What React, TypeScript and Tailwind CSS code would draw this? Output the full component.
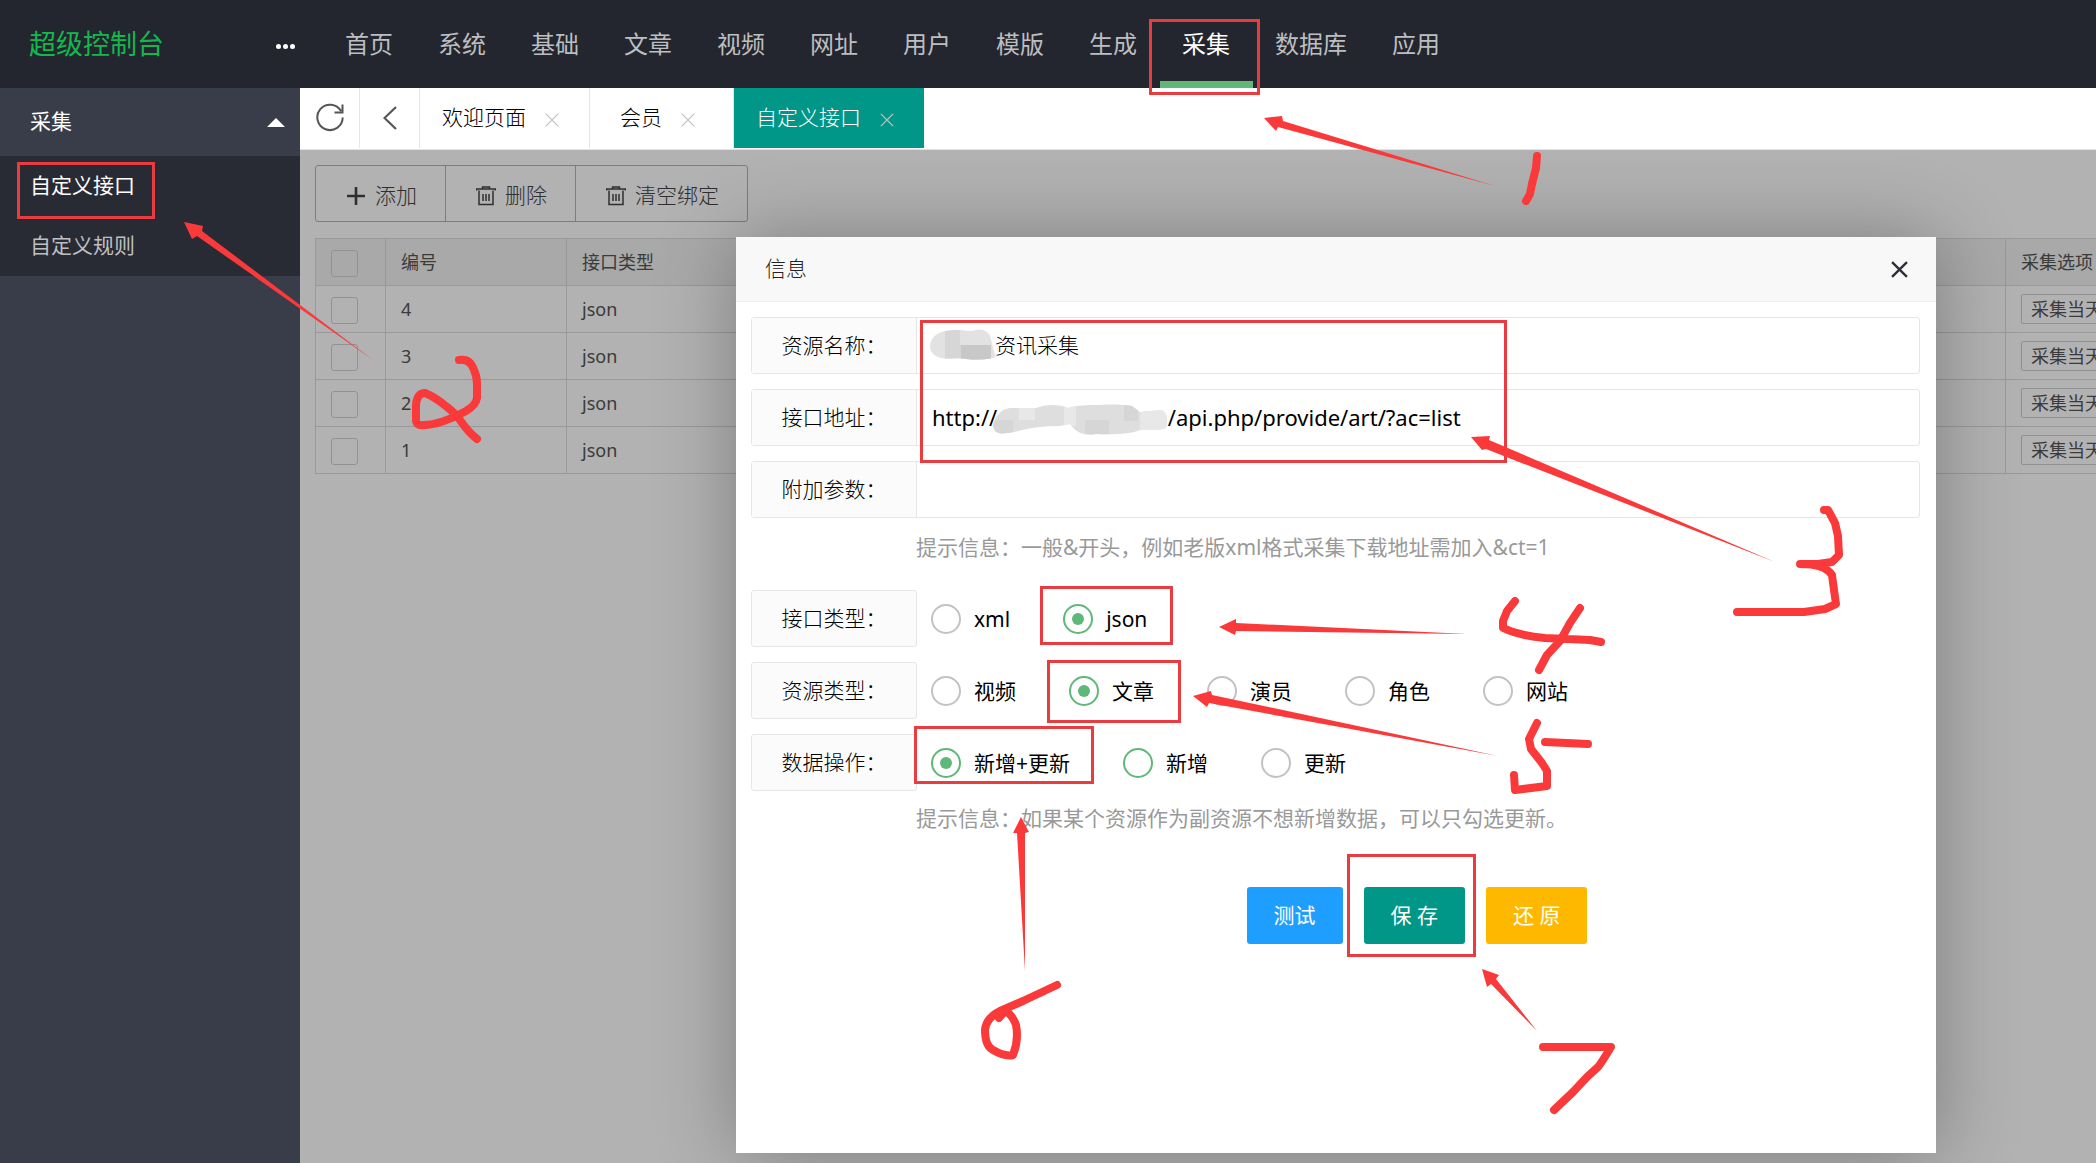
const navItems = ['首页', '系统', '基础', '文章', '视频', '网址', '用户', '模版', '生成', '采集', '数据库', '应用']
const rows = [4, 3, 2, 1]

function TrashIcon() {
  return (
    <svg viewBox="0 0 20 20" className="size-5" fill="none" stroke="currentColor" strokeWidth="1.5">
      <path d="M0.5 4.500v-1.500h19v1.500M6.500 3V1h7v2M3 4.500v14h14v-14M7 8v7M10 8v7M13 8v7" />
    </svg>
  )
}

function PlusIcon() {
  return (
    <svg viewBox="0 0 20 20" className="size-5" fill="none" stroke="currentColor" strokeWidth="2.6">
      <path d="M1 10h18M10 1v18" />
    </svg>
  )
}

function CrossIcon({ className, strokeWidth }: { className: string; strokeWidth: number }) {
  return (
    <svg viewBox="0 0 16 16" className={className} fill="none" stroke="currentColor" strokeWidth={strokeWidth}>
      <path d="M1 1l14 14M15 1L1 15" />
    </svg>
  )
}

function Header() {
  return (
    <header className="flex h-[88px] shrink-0 items-center bg-[#23262e] font-normal">
      <div className="flex w-[323px] shrink-0 items-center justify-between pr-7 pl-[29px]">
        <h1 className="text-[27px] leading-8 text-[#12b84e]">超级控制台</h1>
        <button aria-label="更多" className="mt-1 flex gap-[2px]">
          <i className="size-[5px] rounded-full bg-white" />
          <i className="size-[5px] rounded-full bg-white" />
          <i className="size-[5px] rounded-full bg-white" />
        </button>
      </div>
      <nav className="flex h-full text-2xl text-[#bdbec0]">
        {navItems.map((item) => (
          <a
            key={item}
            href="#"
            className={
              item === '采集'
                ? 'flex items-center border-y-[7px] border-t-transparent border-b-[#5fb878] pr-[23px] pl-[22px] text-white'
                : 'flex items-center pr-[23px] pl-[22px]'
            }
          >
            {item}
          </a>
        ))}
      </nav>
    </header>
  )
}

function Sidebar() {
  return (
    <aside className="w-[300px] shrink-0 bg-[#393d49] text-[21px] font-normal text-white">
      <button className="flex h-[68px] w-full items-center justify-between pr-[15px] pl-[30px]">
        采集
        <svg viewBox="0 0 18 9" className="h-[9px] w-[18px]">
          <path d="M9 0l9 9H0z" fill="#fff" />
        </svg>
      </button>
      <div className="flex flex-col bg-[#282b33]">
        <a href="#" className="flex h-[60px] items-center pl-[30px]">自定义接口</a>
        <a href="#" className="flex h-[60px] items-center pl-[30px] text-[#bebfc2]">自定义规则</a>
      </div>
    </aside>
  )
}

function Tab({ title, active }: { title: string; active?: boolean }) {
  return (
    <div
      className={
        active
          ? 'flex min-w-36 items-center justify-center gap-[19px] bg-[#009688] pr-[30px] pl-[22px] text-white'
          : 'flex min-w-36 items-center justify-center gap-[19px] border-r border-[#e6e6e6] pr-[30px] pl-[22px] text-black'
      }
    >
      <a href="#">{title}</a>
      <button aria-label="关闭" className="pt-1 text-[#c2c2c2]">
        <CrossIcon className="size-[14px]" strokeWidth={1.5} />
      </button>
    </div>
  )
}

function TabBar() {
  return (
    <div className="h-[62px] shrink-0 border-b border-[#e2e2e2] bg-white">
      <div className="flex h-[60px] text-[21px]">
        <button aria-label="刷新" className="flex w-[60px] items-center justify-center border-r border-[#e6e6e6] text-[#555]">
          <svg viewBox="0 0 30 30" className="size-[30px]" fill="none" stroke="currentColor" strokeWidth="2">
            <path d="M27.700 14.500A12.700 12.700 0 1 1 26 8M27.500 1.500V9.500H19.500" />
          </svg>
        </button>
        <button aria-label="后退" className="flex w-[60px] items-center justify-center border-r border-[#e6e6e6] text-[#555]">
          <svg viewBox="0 0 14 24" className="h-6 w-[14px]" fill="none" stroke="currentColor" strokeWidth="2.2">
            <path d="M13 1L1.500 12L13 23" />
          </svg>
        </button>
        <Tab title="欢迎页面" />
        <Tab title="会员" />
        <Tab title="自定义接口" active />
      </div>
    </div>
  )
}

function Check({ label }: { label: string }) {
  return (
    <input
      type="checkbox"
      aria-label={label}
      className="mt-[2px] block size-[27px] appearance-none rounded-[3px] border border-[#d2d2d2]"
    />
  )
}

function DataTable() {
  const cell = 'h-[47px] border border-[#dcdcdc] px-[15px] py-0 text-left font-normal'
  return (
    <table className="w-[1950px] table-fixed border-collapse text-lg text-[#555]">
      <colgroup>
        <col className="w-[70px]" />
        <col className="w-[181px]" />
        <col className="w-[181px]" />
        <col />
        <col className="w-[259px]" />
      </colgroup>
      <thead>
        <tr className="bg-[#f2f2f2]">
          <th className={cell}><Check label="全选" /></th>
          <th className={cell}>编号</th>
          <th className={cell}>接口类型</th>
          <th className={cell} />
          <th className={cell}>采集选项</th>
        </tr>
      </thead>
      <tbody>
        {rows.map((id) => (
          <tr key={id}>
            <td className={cell}><Check label={`选择 ${id}`} /></td>
            <td className={cell}>{id}</td>
            <td className={cell}>json</td>
            <td className={cell} />
            <td className={cell}>
              <button className="h-[30px] rounded-[2px] border border-[#d0d0d0] px-[9px] leading-7">采集当天</button>
            </td>
          </tr>
        ))}
      </tbody>
    </table>
  )
}

function ListPage() {
  const button = 'flex h-full items-center gap-[9px] border-r border-[#b4b4b4] pt-1 pr-7 pl-[30px] last:border-r-0'
  return (
    <div className="flex flex-col items-start gap-4 pt-[15px] pl-[15px]">
      <div className="flex h-[57px] rounded-[3px] border border-[#b4b4b4] text-[21px] text-[#444]">
        <button className={button}><PlusIcon />添加</button>
        <button className={button}><TrashIcon />删除</button>
        <button className={button}><TrashIcon />清空绑定</button>
      </div>
      <DataTable />
    </div>
  )
}

type TextRowProps = { id: string; label: string; value: string; large?: boolean }

function TextRow({ id, label, value, large }: TextRowProps) {
  return (
    <div className="flex h-[57px] rounded-[3px] border border-[#e6e6e6]">
      <label htmlFor={id} className="flex w-[165px] shrink-0 items-center justify-center border-r border-[#e6e6e6] bg-[#fbfbfb]">
        {label}
      </label>
      <input
        id={id}
        type="text"
        defaultValue={value}
        className={
          large ? 'min-w-0 flex-1 px-[15px] text-[22px] font-normal outline-none' : 'min-w-0 flex-1 px-[15px] outline-none'
        }
      />
    </div>
  )
}

type RadioRowProps = { name: string; label: string; options: string[]; selected: string; hovered?: string }

function RadioRow({ name, label, options, selected, hovered }: RadioRowProps) {
  const ring =
    'grid size-[30px] shrink-0 appearance-none place-content-center rounded-full border-2 before:size-3 before:rounded-full checked:border-[#5fb878] checked:before:bg-[#5fb878]'
  return (
    <div role="radiogroup" aria-labelledby={`${name}-label`} className="flex h-[57px]">
      <div
        id={`${name}-label`}
        className="flex w-[166px] shrink-0 items-center justify-center rounded-[3px] border border-[#e6e6e6] bg-[#fbfbfb]"
      >
        {label}
      </div>
      <div className="flex items-center gap-[53px] pl-[14px] font-normal">
        {options.map((option) => (
          <label key={option} className="flex items-center gap-[13px]">
            <input
              type="radio"
              name={name}
              defaultChecked={option === selected}
              className={option === hovered ? `${ring} border-[#5fb878]` : `${ring} border-[#c2c2c2]`}
            />
            <span className="pt-[2px]">{option}</span>
          </label>
        ))}
      </div>
    </div>
  )
}

function InfoDialog() {
  return (
    <div role="dialog" aria-label="信息" className="flex flex-1 flex-col bg-white text-[21px] text-black shadow-[1px_1px_75px_rgba(0,0,0,0.3)]">
      <div className="flex h-[65px] shrink-0 items-center justify-between border-b border-[#eee] bg-[#f8f8f8] pr-7 pl-[29px]">
        <h2 className="text-[#222]">信息</h2>
        <button aria-label="关闭" className="text-[#2e2d3c]">
          <CrossIcon className="size-[17px]" strokeWidth={2.2} />
        </button>
      </div>
      <form className="flex flex-col gap-[15px] pt-[15px] pr-4 pl-[15px]">
        <TextRow id="name" label="资源名称：" value={'\u2003\u2003\u2003资讯采集'} />
        <TextRow
          id="url"
          label="接口地址："
          value={'http://\u2003\u2003\u2003\u2003\u2003\u2003\u2003\u2002\u2005/api.php/provide/art/?ac=list'}
          large
        />
        <TextRow id="params" label="附加参数：" value="" />
        <p className="h-[42px] pl-[165px] leading-7 font-normal text-[#999]">
          提示信息：一般&开头，例如老版xml格式采集下载地址需加入&ct=1
        </p>
        <RadioRow name="format" label="接口类型：" options={['xml', 'json']} selected="json" />
        <RadioRow name="kind" label="资源类型：" options={['视频', '文章', '演员', '角色', '网站']} selected="文章" />
        <RadioRow name="action" label="数据操作：" options={['新增+更新', '新增', '更新']} selected="新增+更新" hovered="新增" />
        <p className="h-[66px] pl-[165px] leading-6 font-normal text-[#999]">
          提示信息：如果某个资源作为副资源不想新增数据，可以只勾选更新。
        </p>
        <div className="flex justify-center gap-[21px] pl-[163px] font-normal text-white">
          <button type="button" className="h-[57px] rounded-[3px] bg-[#1e9fff] px-[27px]">测试</button>
          <button type="button" className="h-[57px] rounded-[3px] bg-[#009688] px-[27px]">保 存</button>
          <button type="reset" className="h-[57px] rounded-[3px] bg-[#ffb800] px-[27px]">还 原</button>
        </div>
      </form>
    </div>
  )
}

// Freehand marks laid over the whole console, in page coordinates.
function Markup() {
  return (
    <svg className="pointer-events-none absolute top-0 left-0 h-[1163px] w-[2096px]" viewBox="0 0 2096 1163" fill="none">
      <defs>
        <clipPath id="maskName">
          <path d="M930 346C931 336 939 331 950 330.500C960 328 968 333 976 330C984 328 990 333 991 339L993 348L996 357C988 360 976 360 966 359C956 357 950 360 941 358C934 356 930 352 930 346Z" />
        </clipPath>
        <clipPath id="maskUrl">
          <path d="M993 426C995 416 1001 409 1010 408L1036 408C1046 404 1060 404 1068 408C1076 405 1090 405 1100 405C1112 404 1126 405 1132 406L1140 412L1162 410C1168 414 1168 420 1166 428L1158 430L1140 430C1132 434 1112 435 1096 434C1082 436 1076 432 1070 424L1060 426C1044 426 1028 428 1014 432C1004 434 998 434 995 431Z" />
        </clipPath>
      </defs>
      <g clipPath="url(#maskName)">
        <path fill="#e2e2e2" d="M925 325h75v40h-75z" />
        <path fill="#cfcfcf" d="M960 345h20v20h-20zM945 330h15v30h-15z" opacity="0.6" />
        <path fill="#c8c8c8" d="M961 345h30v20h-30z" />
      </g>
      <g clipPath="url(#maskUrl)">
        <path fill="#dedede" d="M990 400h180v40H990z" />
        <path fill="#e8e8e8" d="M1019 408h16v12h-16zM1064 406h12v20h-12zM1140 410h30v25h-30z" />
        <path fill="#d6d6d6" d="M1085 420h24v16h-24zM1124 405h14v16h-14zM993 420h20v14h-20z" />
      </g>
      <g stroke="#e83c40" strokeWidth="3">
        <path d="M1150.500 20.500h108v73h-108zM18.500 163.500h135v54h-135zM921.500 321.500h584v140h-584z" />
        <path d="M1041.500 587.500h130v56h-130zM1048.500 661.500h131v60h-131zM915.500 727.500h177v55h-177zM1348.500 855.500h126v100h-126z" />
      </g>
      <g fill="#fa3a3a">
        <path d="M1264 118l18-2 1 5 212 65-217-59-2 4z" />
        <path d="M184 222l19 4-1 5 171 129-176-124-5 3z" />
        <path d="M1471 437l19-1-1 4 286 122-289-113-4 1z" />
        <path d="M1219 627l17-8v4l231 11-231-3-1 4z" />
        <path d="M1193 696l18-5 1 4 286 61-289-53-2 4z" />
        <path d="M1021 817l8 15-4 1 0 138-8-138-4 0z" />
        <path d="M1482 969l17 6-3 4 41 52-46-47-4 3z" />
      </g>
      <g stroke="#fa3a3a" strokeWidth="8" strokeLinecap="round" strokeLinejoin="round">
        <path d="M1537 156L1536 168L1532 184L1530 194L1526 201" />
        <path d="M459 360Q470 358 474 370Q477 376 477 384V398Q476 405 466 411Q440 425 424 425Q417 426 416 421V405Q417 393 425 393Q435 397 447 407Q456 414 460 420Q468 432 477 439" />
        <path d="M1824 510H1828L1835 523L1838 536L1839 555L1832 562L1818 564H1800Q1825 564 1832 575L1834 590L1836 604L1825 609L1804 612H1737" />
        <path d="M1515 601L1507 611L1503 621V628Q1520 636 1545 638L1590 640L1601 642M1580 608L1570 623L1560 641L1547 655L1539 670" />
        <path d="M1537 723L1529 739L1531 749L1542 763L1547 771V786L1515 790L1514 775M1545 742L1588 744" />
        <path d="M1057 985L1023 1001L1000 1011Q986 1018 985 1030Q985 1046 993 1050Q1005 1057 1013 1055Q1019 1040 1016 1025Q1012 1014 1005 1011L999 1018" />
        <path d="M1543 1047H1611Q1602 1062 1598 1067L1587 1077L1573 1092L1554 1110" />
      </g>
    </svg>
  )
}

export default function App() {
  return (
    <div className="relative flex min-h-screen flex-col overflow-hidden font-['Noto_Sans','Noto_Sans_CJK_SC',sans-serif] font-light">
      <Header />
      <div className="flex flex-1">
        <Sidebar />
        <main className="flex min-w-0 flex-1 flex-col">
          <TabBar />
          <div className="relative flex-1 overflow-hidden bg-white">
            <ListPage />
            <div className="absolute inset-0 flex bg-black/30 pt-[87px] pr-40 pb-[10px] pl-[436px]">
              <InfoDialog />
            </div>
          </div>
        </main>
      </div>
      <Markup />
    </div>
  )
}
